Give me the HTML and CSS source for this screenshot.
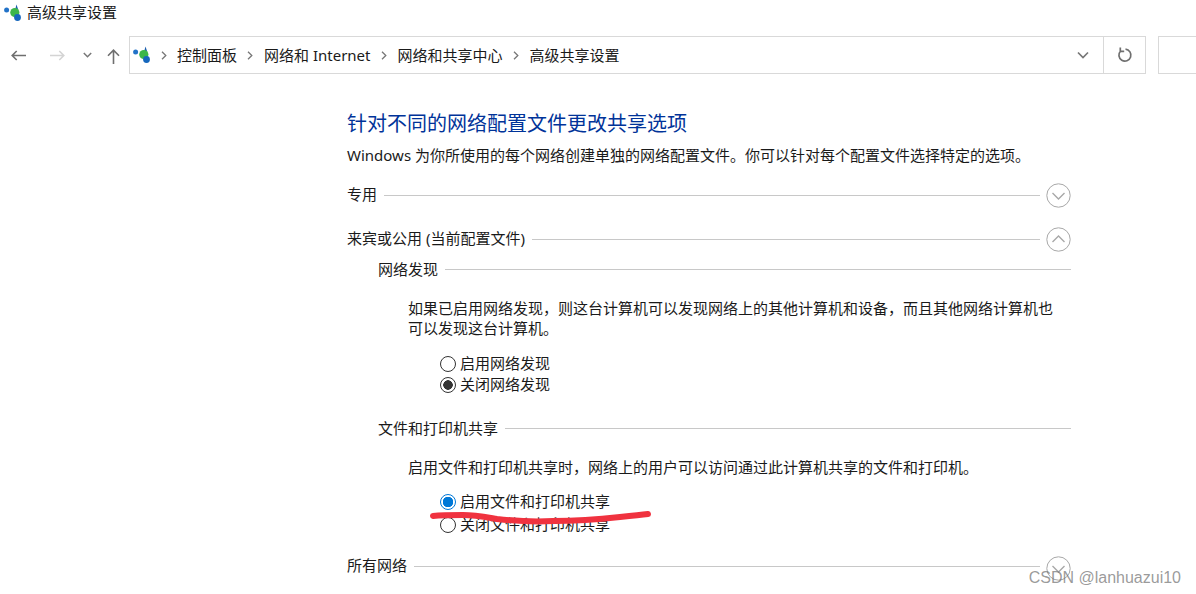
FILE: index.html
```html
<!DOCTYPE html>
<html lang="zh-CN">
<head>
<meta charset="utf-8">
<title>高级共享设置</title>
<link rel="stylesheet" href="styles.css">
</head>
<body>
<svg width="0" height="0" class="defs">
  <symbol id="net" viewBox="0 0 18 18">
    <circle cx="2.600" cy="6" r="2.500" fill="#2272c8"/>
    <path d="M12.500 0.500 L14 5 L11 6 Z" fill="#1c5fae"/>
    <circle cx="10.800" cy="8.500" r="4.600" fill="#3cb64a"/>
    <circle cx="13.500" cy="13.500" r="3.400" fill="#1667bd"/>
  </symbol>
</svg>
<header class="titlebar">
  <svg class="net-icon"><use href="#net"/></svg>
  <span>高级共享设置</span>
</header>
<nav class="navbar">
  <div class="nav-buttons">
    <svg class="nav-back" width="15" height="11" viewBox="0 0 15 11"><path d="M15 5.500H1.200M5.700 1 1.200 5.500 5.700 10" fill="none" stroke="#6f6f6f" stroke-width="1.600"/></svg>
    <svg class="nav-forward" width="15" height="11" viewBox="0 0 15 11"><path d="M0 5.500H13.800M9.300 1 13.800 5.500 9.300 10" fill="none" stroke="#d4d4d4" stroke-width="1.600"/></svg>
    <svg class="nav-drop" width="9" height="6" viewBox="0 0 9 6"><path d="M.8 1 4.500 4.700 8.200 1" fill="none" stroke="#777" stroke-width="1.500"/></svg>
    <svg class="nav-up" width="13" height="15" viewBox="0 0 13 15"><path d="M6.500 15V1.200M1 6.700 6.500 1.200 12 6.700" fill="none" stroke="#6f6f6f" stroke-width="1.600"/></svg>
  </div>
  <div class="address">
    <svg class="net-icon"><use href="#net"/></svg>
    <svg class="crumb-sep first" width="6" height="9" viewBox="0 0 6 9"><path d="M1 .8 4.800 4.500 1 8.200" fill="none" stroke="#777" stroke-width="1.300"/></svg>
    <span class="crumb">控制面板</span>
    <svg class="crumb-sep" width="6" height="9" viewBox="0 0 6 9"><path d="M1 .8 4.800 4.500 1 8.200" fill="none" stroke="#777" stroke-width="1.300"/></svg>
    <span class="crumb">网络和 Internet</span>
    <svg class="crumb-sep" width="6" height="9" viewBox="0 0 6 9"><path d="M1 .8 4.800 4.500 1 8.200" fill="none" stroke="#777" stroke-width="1.300"/></svg>
    <span class="crumb">网络和共享中心</span>
    <svg class="crumb-sep" width="6" height="9" viewBox="0 0 6 9"><path d="M1 .8 4.800 4.500 1 8.200" fill="none" stroke="#777" stroke-width="1.300"/></svg>
    <span class="crumb">高级共享设置</span>
    <span class="spacer"></span>
    <svg class="addr-drop" width="12" height="8" viewBox="0 0 12 8"><path d="M1 1.500 6 6.500 11 1.500" fill="none" stroke="#777" stroke-width="1.700"/></svg>
    <div class="refresh">
      <svg width="16" height="16" viewBox="0 0 16 16"><path d="M8.500 2.200A6 6 0 1 1 3.600 4M3.300 .5V4.400H7.200" fill="none" stroke="#6f6f6f" stroke-width="1.700"/></svg>
    </div>
  </div>
  <div class="searchbox"></div>
</nav>
<main class="content">
  <h1 class="heading">针对不同的网络配置文件更改共享选项</h1>
  <p class="intro">Windows 为你所使用的每个网络创建单独的网络配置文件。你可以针对每个配置文件选择特定的选项。</p>

  <div class="section-head sh-private">
    <span>专用</span><i class="rule"></i>
    <svg class="toggle" width="25" height="25" viewBox="0 0 25 25"><circle cx="12.500" cy="12.500" r="11.700" fill="none" stroke="#a8a8a8"/><path d="M6.500 10 12.500 16 18.500 10" fill="none" stroke="#a8a8a8" stroke-width="1.400"/></svg>
  </div>
  <div class="section-head sh-guest">
    <span>来宾或公用 (当前配置文件)</span><i class="rule"></i>
    <svg class="toggle" width="25" height="25" viewBox="0 0 25 25"><circle cx="12.500" cy="12.500" r="11.700" fill="none" stroke="#a8a8a8"/><path d="M6.500 15 12.500 9 18.500 15" fill="none" stroke="#a8a8a8" stroke-width="1.400"/></svg>
  </div>

  <section class="group">
    <div class="group-head gh-discovery"><span>网络发现</span><i class="rule"></i></div>
    <p class="desc desc-discovery">如果已启用网络发现，则这台计算机可以发现网络上的其他计算机和设备，而且其他网络计算机也可以发现这台计算机。</p>
    <div class="radios radios-discovery">
      <div class="radio-row"><i class="radio"></i><span>启用网络发现</span></div>
      <div class="radio-row"><i class="radio dark"></i><span>关闭网络发现</span></div>
    </div>
  </section>

  <section class="group">
    <div class="group-head gh-sharing"><span>文件和打印机共享</span><i class="rule"></i></div>
    <p class="desc desc-sharing">启用文件和打印机共享时，网络上的用户可以访问通过此计算机共享的文件和打印机。</p>
    <div class="radios radios-sharing">
      <div class="radio-row"><i class="radio blue"></i><span>启用文件和打印机共享</span></div>
      <div class="radio-row"><i class="radio"></i><span>关闭文件和打印机共享</span></div>
    </div>
  </section>

  <div class="section-head sh-all">
    <span>所有网络</span><i class="rule"></i>
    <svg class="toggle" width="25" height="25" viewBox="0 0 25 25"><circle cx="12.500" cy="12.500" r="11.700" fill="none" stroke="#a8a8a8"/><path d="M6.500 10 12.500 16 18.500 10" fill="none" stroke="#a8a8a8" stroke-width="1.400"/></svg>
  </div>
</main>
<svg class="scribble" width="230" height="24" viewBox="0 0 230 24"><path d="M3 8C12 7 24 7 33 7 45 7 55 9 67 11 85 13 105 14 123 13 150 13 172 11 190 9 200 8 210 7 218 6" fill="none" stroke="#f0323f" stroke-width="6" stroke-linecap="round"/></svg>
<div class="watermark">CSDN @lanhuazui10</div>
</body>
</html>
```
FILE: styles.css
```css
* { box-sizing: border-box; }
html, body { margin: 0; height: 594px; overflow: hidden; }
body {
  position: relative;
  background: #fff;
  color: #1a1a1a;
  font-family: "Noto Sans", "Noto Sans CJK SC", sans-serif;
  font-size: 15px;
  line-height: 20px;
}
.defs { position: absolute; }
.net-icon { width: 18px; height: 18px; flex: none; }

.titlebar { display: flex; align-items: center; gap: 5px; height: 25px; padding-left: 4px; }
.titlebar span { margin-bottom: 2px; }

.navbar { display: flex; align-items: center; height: 38px; margin-top: 11px; }
.nav-buttons { display: flex; align-items: center; width: 129px; padding-left: 11px; }
.nav-forward { margin-left: 24px; }
.nav-drop { margin-left: 18px; margin-top: -1px; }
.nav-up { margin-left: 15px; margin-top: 3px; }

.address {
  display: flex; align-items: center; flex: none;
  width: 1017px; height: 38px;
  border: 1px solid #d9d9d9;
  padding-left: 3px;
}
.crumb-sep { margin: 0 11px 0 10px; flex: none; }
.crumb-sep.first { margin-left: 10px; margin-right: 10px; }
.spacer { flex: 1; }
.addr-drop { margin-right: 14px; }
.refresh {
  display: flex; align-items: center; justify-content: center;
  width: 42px; height: 100%;
  border-left: 1px solid #d9d9d9;
}
.searchbox {
  flex: 1; height: 38px; margin-left: 12px;
  border: 1px solid #d9d9d9; border-right: 0;
}

.content { width: 724px; margin-left: 347px; padding-top: 36px; }
.heading { margin: 0; font-size: 20px; font-weight: 400; line-height: 28px; color: #003399; }
.intro { margin: 7px 0 0; white-space: nowrap; }

.section-head, .group-head { display: flex; align-items: center; gap: 7px; }
.section-head { height: 25px; }
.section-head span { margin-bottom: 4px; }
.rule { flex: 1; height: 1px; background: #c8c8c8; }
.toggle { flex: none; margin-left: -1px; }

.sh-private { margin-top: 18px; }
.sh-guest { margin-top: 19px; }

.group { padding-left: 31px; }
.group-head { height: 20px; }
.gh-discovery { margin-top: 7px; }
.gh-sharing { margin-top: 24px; }
.desc { margin: 0 0 0 30px; width: 650px; }
.desc-discovery { margin-top: 19px; }
.desc-sharing { margin-top: 19px; }

.radios { margin-left: 62px; display: flex; flex-direction: column; }
.radios-discovery { margin-top: 15px; gap: 1px; }
.radios-sharing { margin-top: 14px; gap: 3px; }
.radio-row { display: flex; align-items: center; gap: 4px; height: 20px; }
.radio {
  width: 16px; height: 16px; border-radius: 50%;
  border: 1px solid #333; background: #fff; position: relative; top: 1px;
}
.radio.dark { background: radial-gradient(circle, #333 0 4.500px, #fff 5px); }
.radio.blue { border-color: #0078d7; background: radial-gradient(circle, #0078d7 0 5px, #fff 5.500px); }

.sh-all { margin-top: 20px; }
.sh-all .toggle { position: relative; top: 2px; }

.scribble { position: absolute; left: 430px; top: 508px; }
.watermark {
  position: absolute; right: 15px; top: 568px;
  font-family: "Liberation Sans", sans-serif;
  font-size: 16px; line-height: 20px; color: rgba(110, 110, 110, 0.7);
}
```
